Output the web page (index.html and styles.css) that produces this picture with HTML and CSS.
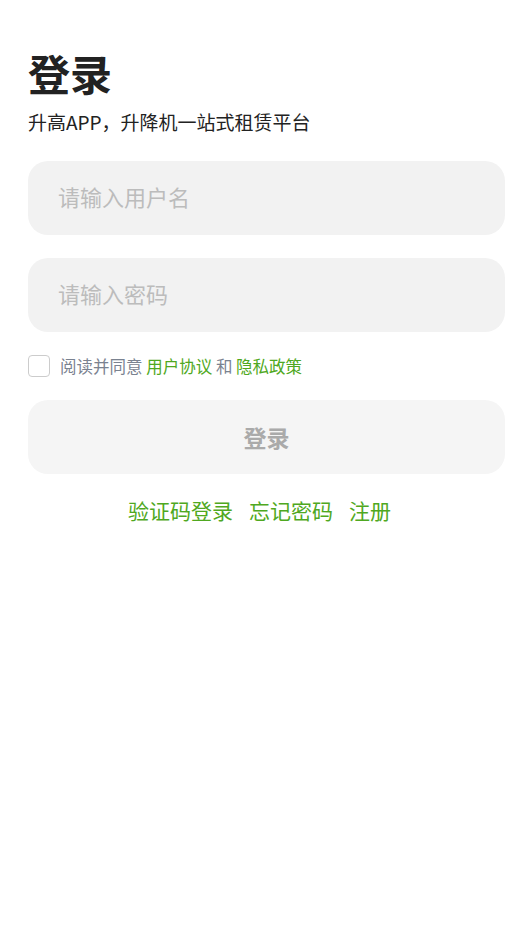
FILE: index.html
```html
<!DOCTYPE html>
<html lang="zh-CN">
<head>
  <meta charset="UTF-8" />
  <meta name="viewport" content="width=device-width, initial-scale=1.0" />
  <title>登录 - 升高APP</title>
  <link rel="stylesheet" href="styles.css">
</head>
<body>
  <div class="page">
    <h1 class="title">登录</h1>
    <p class="subtitle">升高APP，升降机一站式租赁平台</p>

    <form class="login-form">
      <input type="text" class="field" placeholder="请输入用户名" />
      <input type="password" class="field" placeholder="请输入密码" />

      <label class="agree">
        <span class="box"></span>
        <span>阅读并同意 <a class="link">用户协议</a> 和 <a class="link">隐私政策</a></span>
      </label>

      <button type="button" class="submit">登录</button>
    </form>

    <div class="more">
      <a class="link">验证码登录</a>
      <a class="link">忘记密码</a>
      <a class="link">注册</a>
    </div>
  </div>
</body>
</html>
```

FILE: styles.css
```css
body {
  margin: 0;
  background: #fff;
  font-family: "Noto Sans CJK SC", "Noto Sans", sans-serif;
  color: #222;
}
.page {
  padding: 43px 27px 0 28px;
}
.title {
  margin: 0;
  font-size: 42px;
  line-height: 60px;
  font-weight: 700;
  color: #222;
}
.subtitle {
  margin: 5px 0 0;
  font-size: 19px;
  line-height: 28px;
  color: #222;
}
.login-form {
  margin-top: 25px;
  display: flex;
  flex-direction: column;
}
.field {
  box-sizing: border-box;
  height: 74px;
  margin-bottom: 23px;
  padding: 0 30px 5px;
  border: none;
  border-radius: 20px;
  background: #f2f2f2;
  font-family: inherit;
  font-size: 22px;
  color: #333;
  outline: none;
}
.field::placeholder {
  color: #bcbcbc;
}
.agree {
  display: flex;
  align-items: center;
  gap: 10px;
  margin-top: -1px;
  font-size: 16.5px;
  color: #7a8290;
}
.box {
  width: 20px;
  height: 20px;
  border: 1px solid #ccc;
  border-radius: 4px;
}
.link {
  color: #4fa821;
  text-decoration: none;
}
.submit {
  margin-top: 22px;
  height: 74px;
  border: none;
  border-radius: 20px;
  background: #f5f5f5;
  font-family: inherit;
  font-size: 23px;
  font-weight: 700;
  color: #aaa;
}
.more {
  margin-top: 20px;
  padding-right: 14px;
  display: flex;
  justify-content: center;
  gap: 16px;
  font-size: 21px;
  line-height: 32px;
}
```
